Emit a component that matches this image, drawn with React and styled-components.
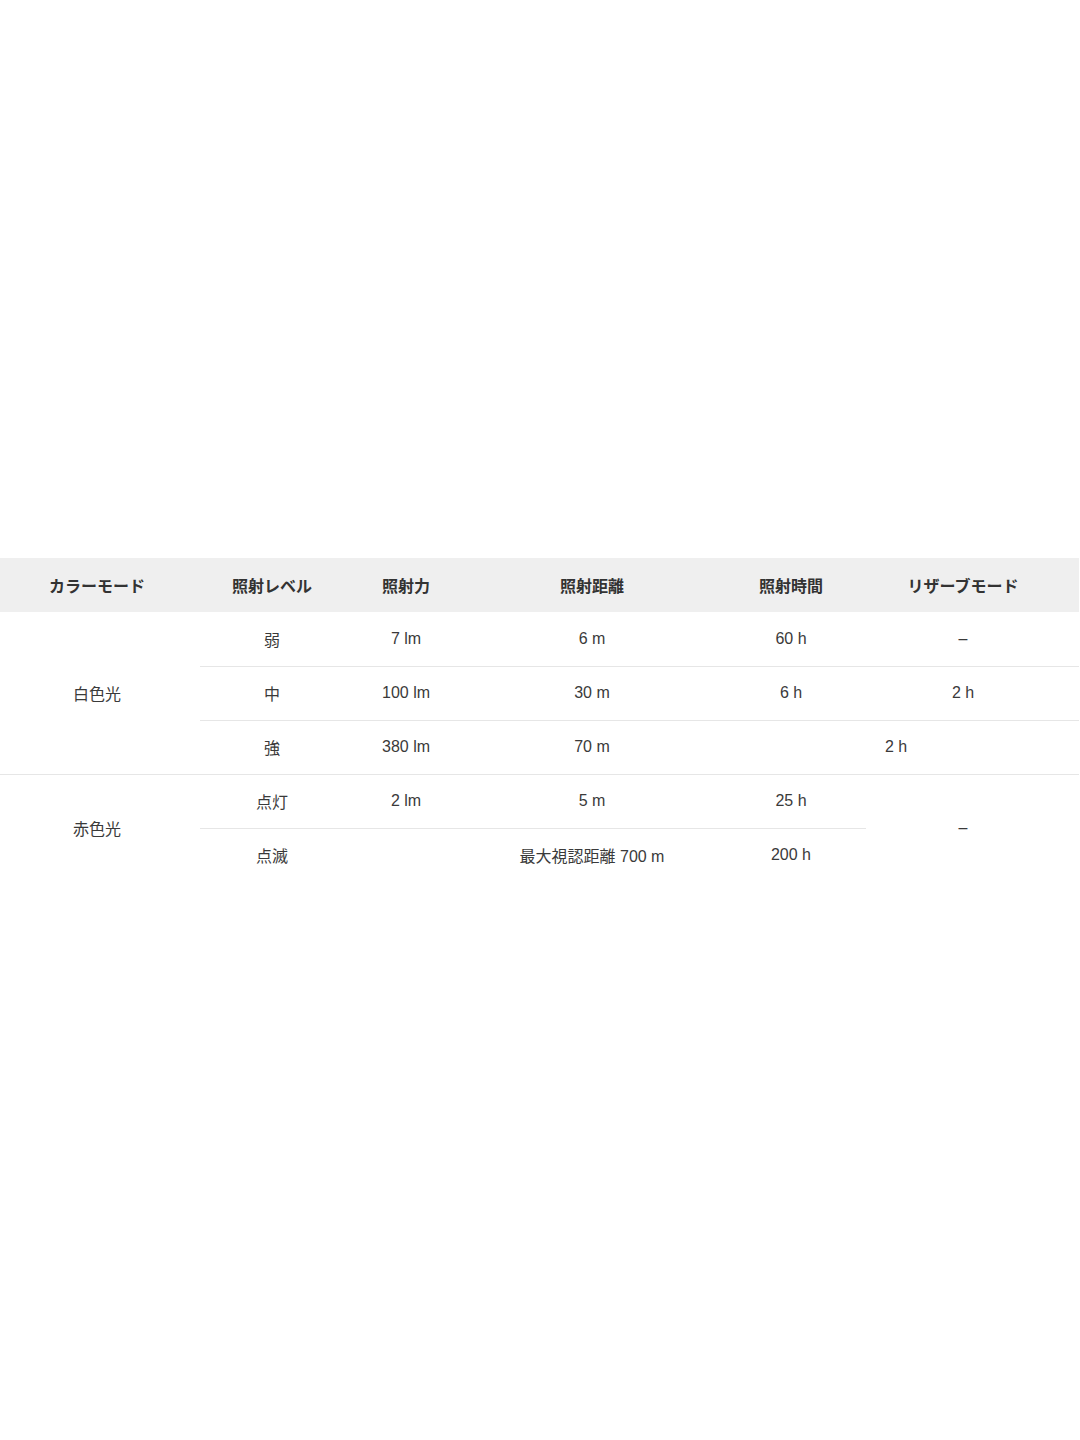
import styled, { createGlobalStyle } from "styled-components";

const GlobalStyle = createGlobalStyle`
  html, body {
    margin: 0;
    padding: 0;
    background: #ffffff;
  }
  body {
    font-family: "Liberation Sans", "Noto Sans CJK JP", sans-serif;
    color: #333333;
  }
`;

const Page = styled.div`
  min-height: 100vh;
  display: flex;
  align-items: center;
`;

const Table = styled.table`
  width: 1079px;
  border-collapse: collapse;
  table-layout: fixed;
  font-size: 16px;
`;

const HeadCell = styled.th`
  height: 54px;
  padding: 0 ${(p) => p.$pr || 0}px 0 0;
  background: #efefef;
  font-weight: bold;
  color: #333333;
  text-align: center;
  vertical-align: middle;
`;

const Row = styled.tr`
  height: 54px;
`;

const Cell = styled.td`
  padding: 0 ${(p) => p.$pr || 0}px 0 0;
  text-align: center;
  vertical-align: middle;
  color: #3a3a3a;
  border-bottom: ${(p) => (p.$noBorder ? "none" : "1px solid #e6e6e6")};
`;

const columns = [
  { label: "カラーモード", width: 200, pr: 6 },
  { label: "照射レベル", width: 144 },
  { label: "照射力", width: 124 },
  { label: "照射距離", width: 248 },
  { label: "照射時間", width: 150 },
  { label: "リザーブモード", width: 213, pr: 19 },
];

export default function App() {
  return (
    <>
      <GlobalStyle />
      <Page>
        <Table>
          <colgroup>
            {columns.map((c) => (
              <col key={c.label} style={{ width: c.width }} />
            ))}
          </colgroup>
          <thead>
            <tr>
              {columns.map((c) => (
                <HeadCell key={c.label} $pr={c.pr}>
                  {c.label}
                </HeadCell>
              ))}
            </tr>
          </thead>
          <tbody>
            <Row>
              <Cell rowSpan={3} $pr={6}>
                白色光
              </Cell>
              <Cell>弱</Cell>
              <Cell>7 lm</Cell>
              <Cell>6 m</Cell>
              <Cell>60 h</Cell>
              <Cell $pr={19}>–</Cell>
            </Row>
            <Row>
              <Cell>中</Cell>
              <Cell>100 lm</Cell>
              <Cell>30 m</Cell>
              <Cell>6 h</Cell>
              <Cell $pr={19}>2 h</Cell>
            </Row>
            <Row>
              <Cell>強</Cell>
              <Cell>380 lm</Cell>
              <Cell>70 m</Cell>
              <Cell colSpan={2} $pr={3}>
                2 h
              </Cell>
            </Row>
            <Row>
              <Cell rowSpan={2} $noBorder $pr={6}>
                赤色光
              </Cell>
              <Cell>点灯</Cell>
              <Cell>2 lm</Cell>
              <Cell>5 m</Cell>
              <Cell>25 h</Cell>
              <Cell rowSpan={2} $noBorder $pr={19}>
                –
              </Cell>
            </Row>
            <Row>
              <Cell $noBorder>点滅</Cell>
              <Cell $noBorder></Cell>
              <Cell $noBorder>最大視認距離 700 m</Cell>
              <Cell $noBorder>200 h</Cell>
            </Row>
          </tbody>
        </Table>
      </Page>
    </>
  );
}
